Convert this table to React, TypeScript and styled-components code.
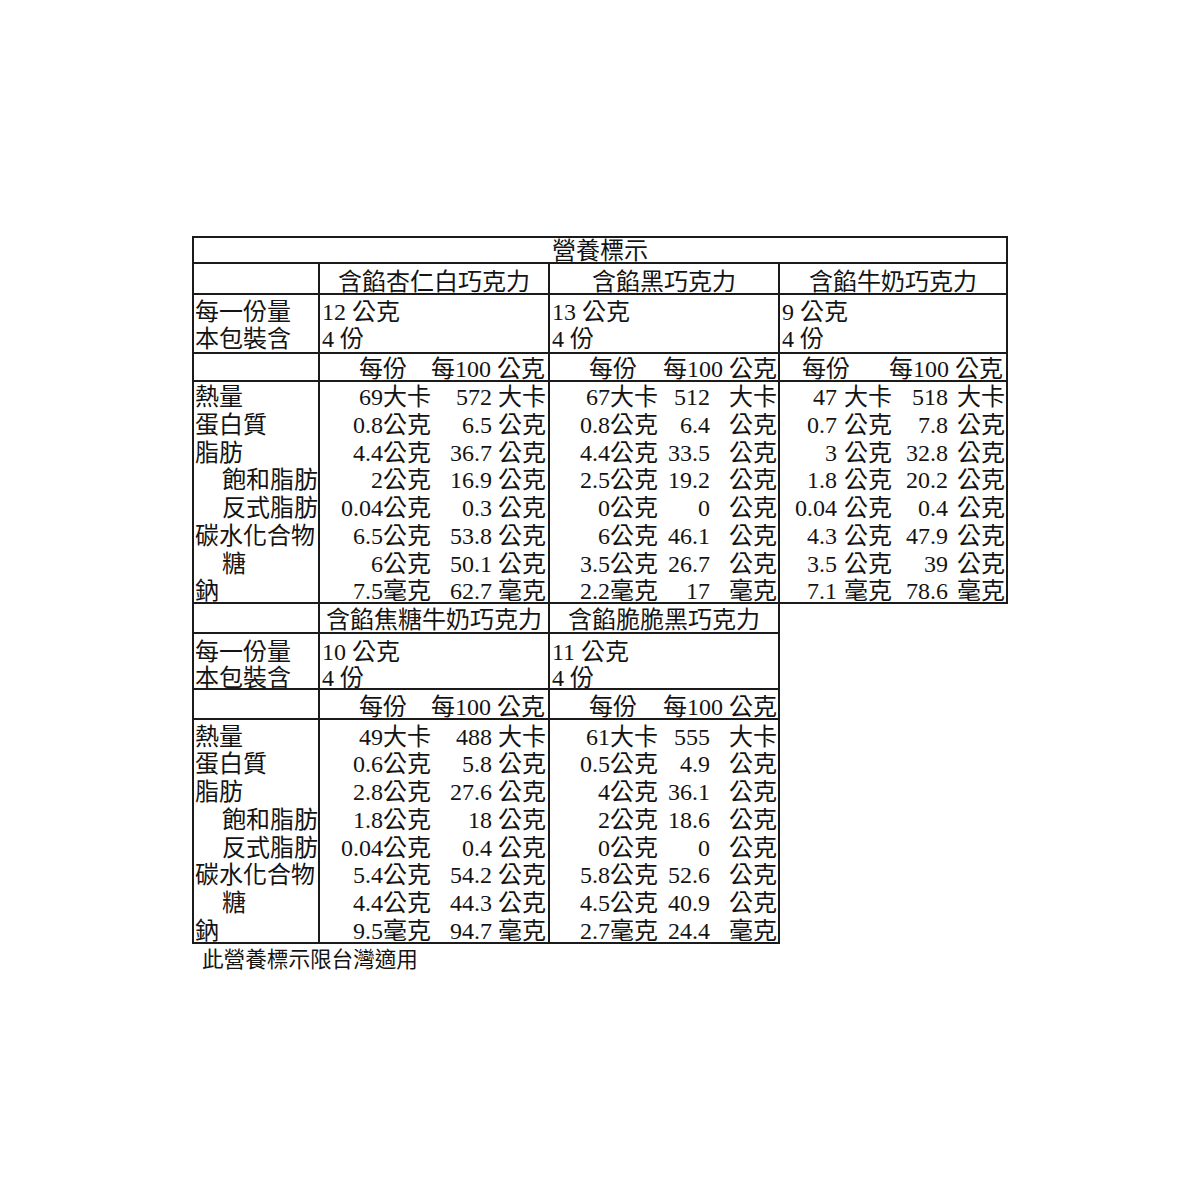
import styled, { createGlobalStyle } from 'styled-components';

const GlobalStyle = createGlobalStyle`
  html, body {
    margin: 0;
    padding: 0;
    background: #fff;
  }
  body {
    font-family: "Liberation Serif", "Noto Sans CJK TC", serif;
    color: #141414;
  }
`

const Page = styled.div`
    display: flex;
    justify-content: center;
    padding-top: 236px;
    min-height: 1200px;
    box-sizing: border-box;
`
const Sheet = styled.div`
    display: flex;
    flex-direction: column;
`
const Grid = styled.div`
    display: grid;
    grid-template-columns: 126px 230px 230px 228px;
    grid-template-rows: 26px 31px 59px 28px 222px 30px 56px 30px 224px;
    border-top: 2px solid #1b1b1b;
    border-left: 2px solid #1b1b1b;
    font-size: 24px;
`
const Cell = styled.div<{ $lh?: number; $pt?: number }>`
    box-sizing: border-box;
    border-right: 2px solid #1b1b1b;
    border-bottom: 2px solid #1b1b1b;
    white-space: pre;
    line-height: ${p => p.$lh ?? 24}px;
    padding-top: ${p => p.$pt ?? 0}px;
`
const TitleCell = styled(Cell)`
    grid-column: 1 / -1;
    text-align: center;
`
const NameCell = styled(Cell)`
    text-align: center;
`
const ServingCell = styled(Cell)`
    padding-left: 2px;
`
const LabelCell = styled(Cell)`
    padding-left: 1px;
`
const Blank = styled.div``

const PerCell = styled(Cell)<{ $cols: string }>`
    display: grid;
    grid-template-columns: ${p => p.$cols};
    justify-items: end;
`
const Line = styled.div<{ $indent?: boolean }>`
    padding-left: ${p => (p.$indent ? 27 : 0)}px;
`
const ValueRow = styled.div<{ $cols: string }>`
    display: grid;
    grid-template-columns: ${p => p.$cols};
    justify-items: end;
`
const Footer = styled.div`
    font-family: "Noto Sans CJK TC", sans-serif;
    font-size: 21.6px;
    line-height: 24px;
    padding: 2px 0 0 10px;
`

type Kind = 'a' | 'b' | 'c'

const LAYOUT: Record<Kind, { per: string; vals: string }> = {
    a: { per: '87px 138px', vals: '111px 115px' },
    b: { per: '87px 140px', vals: '108px 52px 67px' },
    c: { per: '70px 153px', vals: '57px 55px 56px 57px' },
}

type Product = { name: string; serving: string; kind: Kind; rows: string[][] }

const labels = [
    { text: '熱量' },
    { text: '蛋白質' },
    { text: '脂肪' },
    { text: '飽和脂肪', indent: true },
    { text: '反式脂肪', indent: true },
    { text: '碳水化合物' },
    { text: '糖', indent: true },
    { text: '鈉' },
]

const block1: Product[] = [
    {
        name: '含餡杏仁白巧克力', serving: '12 公克', kind: 'a', rows: [
            ['69大卡', '572 大卡'], ['0.8公克', '6.5 公克'], ['4.4公克', '36.7 公克'], ['2公克', '16.9 公克'],
            ['0.04公克', '0.3 公克'], ['6.5公克', '53.8 公克'], ['6公克', '50.1 公克'], ['7.5毫克', '62.7 毫克'],
        ],
    },
    {
        name: '含餡黑巧克力', serving: '13 公克', kind: 'b', rows: [
            ['67大卡', '512', '大卡'], ['0.8公克', '6.4', '公克'], ['4.4公克', '33.5', '公克'], ['2.5公克', '19.2', '公克'],
            ['0公克', '0', '公克'], ['6公克', '46.1', '公克'], ['3.5公克', '26.7', '公克'], ['2.2毫克', '17', '毫克'],
        ],
    },
    {
        name: '含餡牛奶巧克力', serving: '9 公克', kind: 'c', rows: [
            ['47', '大卡', '518', '大卡'], ['0.7', '公克', '7.8', '公克'], ['3', '公克', '32.8', '公克'], ['1.8', '公克', '20.2', '公克'],
            ['0.04', '公克', '0.4', '公克'], ['4.3', '公克', '47.9', '公克'], ['3.5', '公克', '39', '公克'], ['7.1', '毫克', '78.6', '毫克'],
        ],
    },
]

const block2: Product[] = [
    {
        name: '含餡焦糖牛奶巧克力', serving: '10 公克', kind: 'a', rows: [
            ['49大卡', '488 大卡'], ['0.6公克', '5.8 公克'], ['2.8公克', '27.6 公克'], ['1.8公克', '18 公克'],
            ['0.04公克', '0.4 公克'], ['5.4公克', '54.2 公克'], ['4.4公克', '44.3 公克'], ['9.5毫克', '94.7 毫克'],
        ],
    },
    {
        name: '含餡脆脆黑巧克力', serving: '11 公克', kind: 'b', rows: [
            ['61大卡', '555', '大卡'], ['0.5公克', '4.9', '公克'], ['4公克', '36.1', '公克'], ['2公克', '18.6', '公克'],
            ['0公克', '0', '公克'], ['5.8公克', '52.6', '公克'], ['4.5公克', '40.9', '公克'], ['2.7毫克', '24.4', '毫克'],
        ],
    },
]

// vertical placement of each block's rows: [name, serving, per, data]
type Spacing = { name: number; servLh: number; serv: number; per: number; dataLh: number; data: number }

const Block = ({ products, sp }: { products: Product[]; sp: Spacing }) => {
    const fill = Array.from({ length: 3 - products.length })
    return (
        <>
            <Cell />
            {products.map(p => <NameCell key={p.name} $pt={sp.name}>{p.name}</NameCell>)}
            {fill.map((_, i) => <Blank key={'n' + i} />)}

            <LabelCell $lh={sp.servLh} $pt={sp.serv}>
                <div>每一份量</div>
                <div>本包裝含</div>
            </LabelCell>
            {products.map(p => (
                <ServingCell key={p.name} $lh={sp.servLh} $pt={sp.serv}>
                    <div>{p.serving}</div>
                    <div>4 份</div>
                </ServingCell>
            ))}
            {fill.map((_, i) => <Blank key={'s' + i} />)}

            <Cell />
            {products.map(p => (
                <PerCell key={p.name} $pt={sp.per} $cols={LAYOUT[p.kind].per}>
                    <span>每份</span>
                    <span>每100 公克</span>
                </PerCell>
            ))}
            {fill.map((_, i) => <Blank key={'p' + i} />)}

            <LabelCell $lh={sp.dataLh} $pt={sp.data}>
                {labels.map(l => <Line key={l.text} $indent={l.indent}>{l.text}</Line>)}
            </LabelCell>
            {products.map(p => (
                <Cell key={p.name} $lh={sp.dataLh} $pt={sp.data}>
                    {p.rows.map((r, i) => (
                        <ValueRow key={i} $cols={LAYOUT[p.kind].vals}>
                            {r.map((v, j) => <span key={j}>{v}</span>)}
                        </ValueRow>
                    ))}
                </Cell>
            ))}
            {fill.map((_, i) => <Blank key={'d' + i} />)}
        </>
    )
}

const App = () => {
    return (
        <Page>
            <GlobalStyle />
            <Sheet>
                <Grid>
                    <TitleCell $lh={26}>營養標示</TitleCell>
                    <Block products={block1} sp={{ name: 6, servLh: 27, serv: 3.5, per: 3, dataLh: 27.75, data: 2 }} />
                    <Block products={block2} sp={{ name: 4, servLh: 26, serv: 5, per: 5, dataLh: 27.8, data: 3.5 }} />
                </Grid>
                <Footer>此營養標示限台灣適用</Footer>
            </Sheet>
        </Page>
    )
}

export default App
